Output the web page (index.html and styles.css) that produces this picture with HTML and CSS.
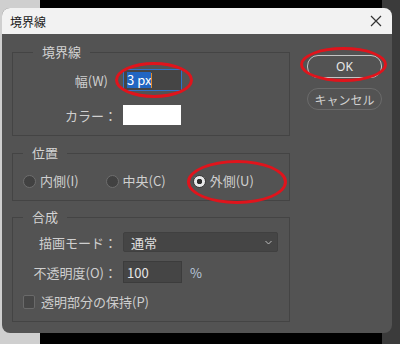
FILE: index.html
```html
<!DOCTYPE html>
<html lang="ja">
<head>
    <meta charset="UTF-8">
    <title>境界線</title>
    <link rel="stylesheet" href="styles.css">
</head>
<body>

    <div class="dialog">
        <!-- Title bar -->
        <div class="titlebar">
            <span class="title">境界線</span>
            <svg class="close" width="12" height="12" viewBox="0 0 12 12">
                <path d="M1 1 L11 11 M11 1 L1 11" stroke="#333" stroke-width="1.2" fill="none"/>
            </svg>
        </div>

        <div class="content">
            <div class="groups">
                <fieldset class="group">
                    <legend>境界線</legend>
                    <div class="form-grid">
                        <span class="label label-nocolon">幅(W)</span>
                        <div class="input focused"><span class="selected">3 px</span><span class="caret"></span></div>
                        <span class="label">カラー：</span>
                        <div class="swatch"></div>
                    </div>
                </fieldset>

                <fieldset class="group group-position">
                    <legend>位置</legend>
                    <div class="radios">
                        <label class="radio"><span class="dot"></span>内側(I)</label>
                        <label class="radio"><span class="dot"></span>中央(C)</label>
                        <label class="radio"><span class="dot checked"></span>外側(U)</label>
                    </div>
                </fieldset>

                <fieldset class="group group-blend">
                    <legend>合成</legend>
                    <div class="form-grid">
                        <span class="label">描画モード：</span>
                        <div class="select">
                            <span>通常</span>
                            <svg width="7" height="5" viewBox="0 0 7 5">
                                <path d="M0.5 1 L3.5 4 L6.5 1" stroke="#bdbdbd" stroke-width="1" fill="none"/>
                            </svg>
                        </div>
                        <span class="label">不透明度(O)：</span>
                        <div class="opacity-row">
                            <div class="input">100</div>
                            <span class="unit">%</span>
                        </div>
                    </div>
                    <label class="check"><span class="box"></span>透明部分の保持(P)</label>
                </fieldset>
            </div>

            <div class="buttons">
                <button class="btn btn-ok">OK</button>
                <button class="btn">キャンセル</button>
            </div>
        </div>

        <!-- red markers drawn over the dialog -->
        <div class="mark mark-width"></div>
        <div class="mark mark-ok"></div>
        <div class="mark mark-outside"></div>
    </div>

</body>
</html>
```

FILE: styles.css
```css
/* General Styles */
body {
    margin: 0;
    height: 344px;
    overflow: hidden;
    font-family: "Noto Sans CJK JP", "Noto Sans", sans-serif;
    background: linear-gradient(to right, #cfcfcf 0 40px, #000 40px 382px, #3b3b3b 382px);
}

/* Dialog */
.dialog {
    position: relative;
    width: 390px;
    height: 325px;
    margin: 8px 0 0 2px;
    background-color: #535353;
    border-radius: 8px;
    overflow: hidden;
}

.titlebar {
    height: 26px;
    background-color: #f2f2f2;
    display: flex;
    align-items: center;
    justify-content: space-between;
    padding: 0 10px 0 8px;
}

.title {
    font-size: 12px;
    color: #1a1a1a;
}

/* Content */
.content {
    display: flex;
    gap: 17px;
    padding: 10px 10px 0 10px;
}

.groups {
    width: 278px;
    display: flex;
    flex-direction: column;
}

.group {
    margin: 0;
    padding: 9px 10px 10px 10px;
    border: 1px solid #444;
    color: #cfcfcf;
    font-size: 13px;
}

.group legend {
    margin-left: 10px;
    padding: 0 9px;
    line-height: 16px;
    color: #d4d4d4;
}

.group-position {
    margin-top: 9px;
    padding: 12px 10px 11px 0;
}

.group-blend {
    margin-top: 8px;
    padding: 7px 10px 11px 0;
}

.form-grid {
    display: grid;
    grid-template-columns: 94px auto;
    column-gap: 6px;
    row-gap: 14px;
    align-items: center;
}

.group-blend .form-grid {
    row-gap: 9px;
    padding-left: 10px;
}

.label {
    text-align: right;
    white-space: nowrap;
}

.label-nocolon {
    padding-right: 9px;
}

.input {
    box-sizing: border-box;
    width: 59px;
    height: 22px;
    background-color: #454545;
    border: 1px solid #3c3c3c;
    display: flex;
    align-items: center;
    padding-left: 3px;
    color: #e6e6e6;
    font-size: 13px;
}

.input.focused {
    border-color: #2f72c8;
}

.selected {
    background-color: #2166c2;
    color: #fff;
    line-height: 16px;
}

.caret {
    width: 1px;
    height: 15px;
    background-color: #e08a2c;
}

.swatch {
    width: 58px;
    height: 20px;
    background-color: #fff;
}

/* Radios */
.radios {
    display: flex;
    padding-left: 10px;
    gap: 27px;
}

.radio {
    display: flex;
    align-items: center;
    gap: 4px;
    line-height: 16px;
}

.dot {
    box-sizing: border-box;
    width: 13px;
    height: 13px;
    border-radius: 50%;
    background-color: #414141;
    border: 1px solid #6e6e6e;
}

.dot.checked {
    background: radial-gradient(circle, #2e2e2e 0 2.5px, #e8e8e8 3px);
    border-color: #3a3a3a;
}

/* Select */
.select {
    box-sizing: border-box;
    width: 155px;
    height: 20px;
    background-color: #454545;
    border: 1px solid #404040;
    border-radius: 2px;
    display: flex;
    align-items: center;
    justify-content: space-between;
    padding: 0 5px 0 7px;
    color: #e0e0e0;
}

.opacity-row {
    display: flex;
    align-items: center;
    gap: 8px;
}

.unit {
    color: #b9c8dc;
}

/* Checkbox */
.check {
    display: flex;
    align-items: center;
    gap: 6px;
    margin-top: 11px;
    padding-left: 10px;
    line-height: 16px;
}

.box {
    box-sizing: border-box;
    width: 12px;
    height: 14px;
    border: 1px solid #6a6a6a;
    border-radius: 2px;
    background-color: #474747;
}

/* Buttons */
.buttons {
    display: flex;
    flex-direction: column;
    gap: 10px;
    padding-top: 11px;
}

.btn {
    width: 75px;
    height: 22px;
    border-radius: 11px;
    border: 1px solid #6b6b6b;
    background-color: #535353;
    color: #d0d0d0;
    font-family: inherit;
    font-size: 12px;
    padding: 0;
}

.btn-ok {
    height: 23px;
    border-color: #c4c4c4;
    color: #e8e8e8;
    font-family: "Noto Sans", sans-serif;
}

/* Red markers */
.mark {
    position: absolute;
    border: 3px solid #e0141c;
    border-radius: 50%;
}

.mark-width {
    left: 113px;
    top: 54px;
    width: 72px;
    height: 30px;
}

.mark-ok {
    left: 298px;
    top: 39px;
    width: 81px;
    height: 29px;
}

.mark-outside {
    left: 185px;
    top: 152px;
    width: 94px;
    height: 38px;
}
```
